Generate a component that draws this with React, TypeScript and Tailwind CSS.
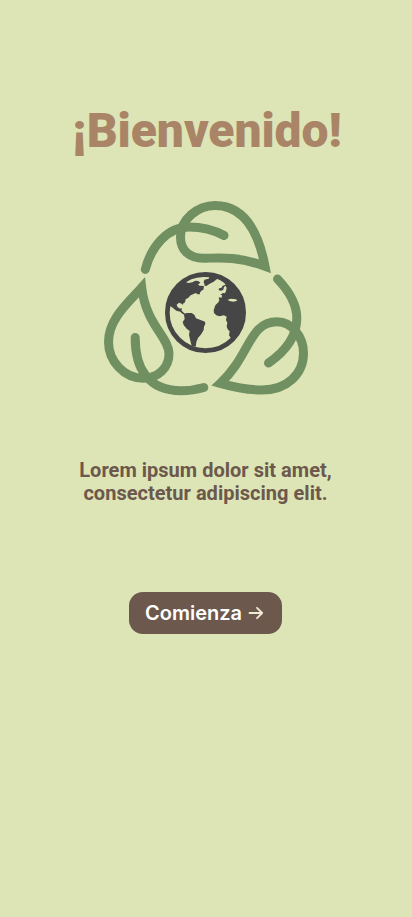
function LeafCycle() {
  return (
    <svg className="h-[210px] w-[220px]" viewBox="96 192 220 210" fill="none" aria-hidden="true">
      <g stroke="#709062" strokeWidth="9" strokeLinecap="round" strokeMiterlimit="10">
        <path d="M265 266.200C260 240 248 205.500 215 205.500C198 205.500 180.500 219 180.500 237C180.500 251 190 258.500 204 258.300C214 258.300 235 255 265 266.200Z" />
        <path d="M145.300 269.500C151 247 167 227 189 227C203 227 214 230 224 235.500" />
        <path d="M141.700 287.600C128 303 108.500 319 108.500 342C108.500 361 124 378.300 143.300 378.300C158 378.300 169 368 169 353.500C169 337 146 325 141.700 287.600Z" />
        <path d="M135.200 337.500C135 368 148 390.700 181 390.700C190 390.700 197 389.500 203.800 387.500" />
        <path d="M220.300 383.300C250 356 249 321.700 277 321.700C292 321.700 303.500 337 303.500 353C303.500 374 287 390 262 390C249 390 235 387.500 220.300 383.300Z" />
        <path d="M277.500 279C288 290 296.800 303 296.800 318C296.800 339 283 353 268.500 363" />
      </g>
      <g transform="translate(160 265) scale(.33333)">
        <circle cx="136.500" cy="142.500" r="114.500" stroke="#464646" strokeWidth="14" />
        <path fill="#464646" d="M20 128C28 84 53 51 90 34L136 24L183 36L172 41L161 50L148 57L139 63L132 62L130 75L126 76L121 81L119 88L113 88L107 84L99 88L92 91L85 98L77 103L75 112L69 116L68 120L65 116L57 113L50 119L53 127L61 131L65 128L65 137L73 145L81 148L76 151L67 146L61 140L49 137L36 127L31 123L28 137Z" />
        <path fill="#dde5b6" d="M78 52L94 43L111 38L130 36L148 37L146 41L133 44L131 52L134 59L133 63L119 62L114 59L121 53L115 48L106 47L97 52L86 54Z" />
        <path fill="#464646" d="M72 149L79 144L95 144L103 149L108 160L120 164L135 170L136 176L132 185L131 195L124 207L114 219L109 231L107 245L95 243L91 227L87 209L89 198L80 191L71 180L68 171L74 162Z" />
        <path fill="#464646" d="M168 36L192 45L215 62L234 87L249 112L253 142L250 173L238 201L216 225L207 211L209 199L204 194L200 185L202 173L198 165L200 155L192 151L178 154L169 151L162 144L161 136L166 121L175 112L178 106L176 97L185 98L186 91L181 89L189 84L195 85L198 78L200 68L196 62L192 66L190 74L184 77L176 76L177 70L184 69L188 62L197 59L192 53L181 46L172 42Z" />
        <path fill="#dde5b6" d="M203 104L213 101L228 103L232 107L220 110L208 108Z" />
      </g>
    </svg>
  );
}

export default function App() {
  return (
    <main className="flex min-h-screen flex-col items-center bg-[#dde5b6] pt-[103px]">
      <h1 className="h-[56px] whitespace-nowrap pl-0.5 font-['Roboto',sans-serif] text-[48px] font-black leading-[56px] tracking-[-0.05px] text-[#a98467]">
        ¡Bienvenido!
      </h1>
      <div className="mt-[33px] h-[210px]">
        <LeafCycle />
      </div>
      <p className="mt-[57px] pr-px text-center font-['Roboto',sans-serif] text-[20px] font-bold leading-[23px] tracking-[0.02px] text-[#6c584c]">
        Lorem ipsum dolor sit amet,
        <br />
        consectetur adipiscing elit.
      </p>
      <button className="mr-px mt-[87px] flex h-[42px] w-[153px] items-center rounded-[14px] bg-[#6c584c] pl-4 font-['Inter',sans-serif] text-[20px] font-semibold text-white">
        Comienza
        <svg className="ml-1.5 h-4 w-4" viewBox="0 0 16 16" fill="none" stroke="#f0ead2" strokeWidth="1.8" strokeLinecap="round" strokeLinejoin="round" aria-hidden="true">
          <path d="M1.500 8H14M9 2.800L14.200 8L9 13.200" />
        </svg>
      </button>
    </main>
  );
}
